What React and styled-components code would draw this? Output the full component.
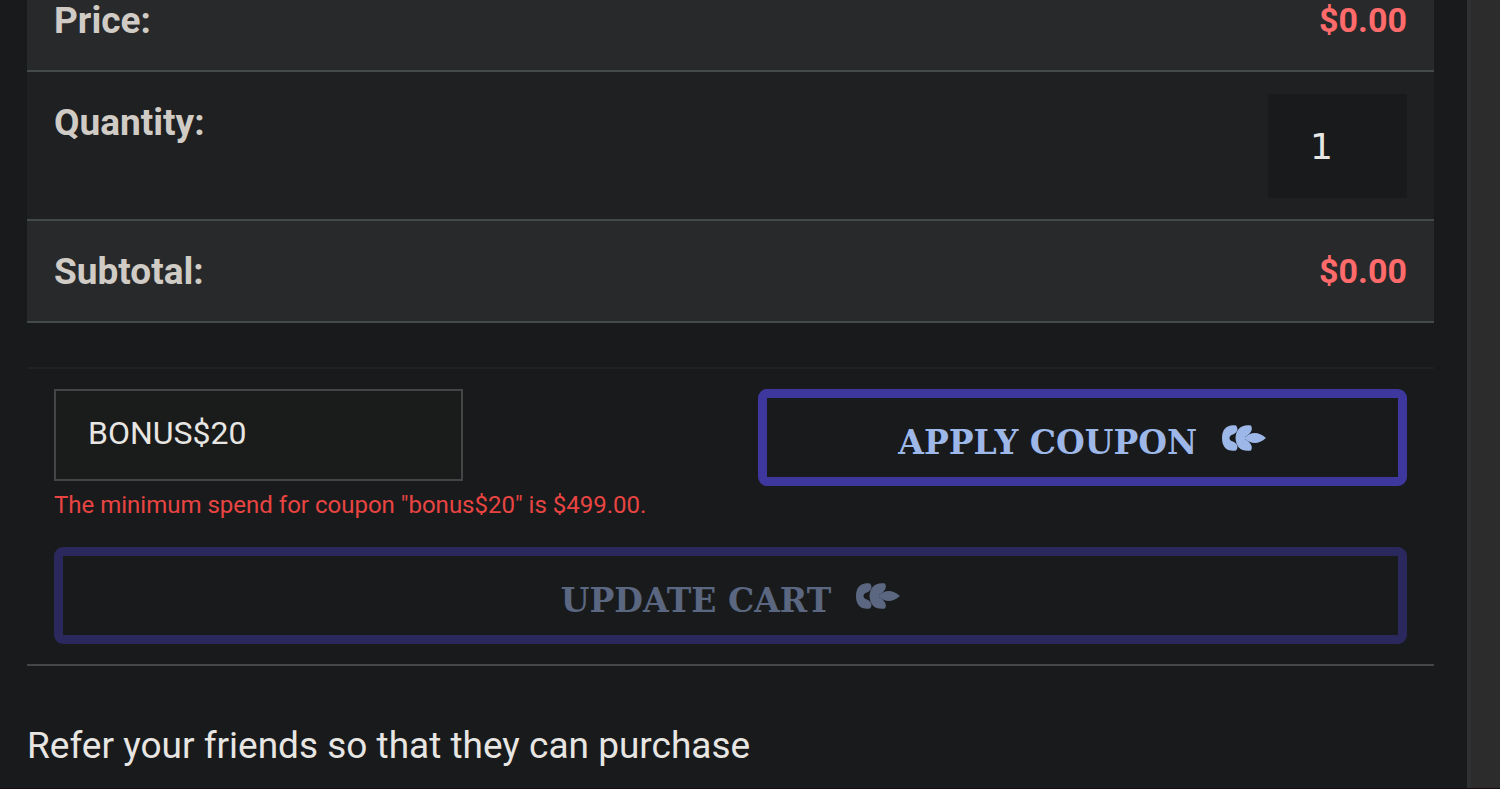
import React, { useState } from "react";
import styled, { createGlobalStyle } from "styled-components";

const GlobalStyle = createGlobalStyle`
  *, *::before, *::after { box-sizing: border-box; }
  body {
    margin: 0;
    background: #191a1c;
    color: #e8e6e3;
    font-family: Roboto, "Liberation Sans", sans-serif;
  }
`;

const Page = styled.div`
  display: flex;
  min-height: 100vh;
  overflow: hidden;
  border-bottom: 1px solid #170e12;
`;

const Content = styled.main`
  flex: 1;
  min-width: 0;
  padding: 0 33px 0 27px;
`;

const Gutter = styled.div`
  flex: 0 0 33px;
  background: #2c2c2c;
  border-left: 4px solid #2f3032;
`;

const CartTable = styled.table`
  width: 100%;
  margin: -30px 0 44px;
  border-spacing: 0;
  font-size: 37px;
  line-height: 57px;
`;

const Row = styled.tr`
  background: ${({ $raised }) => ($raised ? "#28292b" : "#1f2022")};
`;

const Label = styled.th`
  padding: 22px 27px 21px;
  border-bottom: 2px solid #444949;
  color: #d0ccc5;
  font-weight: 700;
  text-align: left;
  vertical-align: top;
`;

const Value = styled.td`
  padding: 22px 27px 21px;
  border-bottom: 2px solid #444949;
  color: #ff6b6b;
  font-size: 34px;
  font-weight: 700;
  text-align: right;
`;

const QuantityInput = styled.input`
  display: block;
  width: 139px;
  height: 104px;
  margin-left: auto;
  padding: 0 32px 0 42px;
  border: 0;
  border-radius: 0;
  background: #191a1b;
  color: #e8e6e3;
  font: 36px "DejaVu Sans", sans-serif;
  appearance: textfield;

  &::-webkit-inner-spin-button {
    display: none;
  }
`;

const Actions = styled.form`
  padding: 20px 27px;
  border-top: 2px solid #202123;
  border-bottom: 2px solid #454648;
`;

const CouponRow = styled.div`
  display: flex;
  justify-content: space-between;
  align-items: flex-start;
  margin-bottom: 26px;
`;

const CouponInput = styled.input`
  display: block;
  width: 409px;
  height: 92px;
  padding: 0 32px 4px;
  border: 2px solid #434546;
  border-radius: 0;
  background: #1a1b1b;
  color: #e8e6e3;
  font: 32px Roboto, "Liberation Sans", sans-serif;
`;

const CouponError = styled.p`
  margin: 8px 0 0;
  color: #e84542;
  font-size: 24px;
  line-height: 32px;
  white-space: nowrap;
`;

const ActionButton = styled.button`
  display: flex;
  justify-content: center;
  align-items: center;
  gap: 25px;
  width: ${({ $wide }) => ($wide ? "100%" : "48%")};
  height: 97px;
  padding: 0;
  border: 9px solid #3e379d;
  border-radius: 9px;
  background: transparent;
  color: #9db7e8;
  font: 700 33px "DejaVu Serif", serif;
  text-transform: uppercase;

  &:disabled {
    border-color: #2b285d;
    color: #5b6780;
  }
`;

const ButtonText = styled.span`
  padding-top: 10px;
`;

const Referral = styled.p`
  margin: 51px 0 0;
  font-size: 37px;
  line-height: 57px;
`;

function LeafIcon() {
  return (
    <svg width="44" height="26" viewBox="0 0 44 26" fill="currentColor" aria-hidden="true">
      <path d="M0 13C0 4 5-1 14 .4C17 4 15 8 11 9.500Q7.500 10.500 7.500 13Q7.500 15.500 11 16.500C15 18 17 22 14 25.600C5 27 0 22 0 13Z" />
      <path d="M13.500 13C14 4 19-1 29 .4C31.500 5 28 9 23 12L23 14C28 17 31.500 21 29 25.600C19 27 14 22 13.500 13Z" />
      <path d="M22 13C29 6.500 36 6 44 13C36 20 29 19.500 22 13Z" />
    </svg>
  );
}

export default function App() {
  const [quantity, setQuantity] = useState("1");
  const [coupon, setCoupon] = useState("BONUS$20");

  return (
    <>
      <GlobalStyle />
      <Page>
        <Content>
          <CartTable>
            <tbody>
              <Row $raised>
                <Label scope="row">Price:</Label>
                <Value>$0.00</Value>
              </Row>
              <Row>
                <Label scope="row">
                  <label htmlFor="quantity">Quantity:</label>
                </Label>
                <Value>
                  <QuantityInput
                    id="quantity"
                    type="number"
                    min="0"
                    value={quantity}
                    onChange={(e) => setQuantity(e.target.value)}
                  />
                </Value>
              </Row>
              <Row $raised>
                <Label scope="row">Subtotal:</Label>
                <Value>$0.00</Value>
              </Row>
            </tbody>
          </CartTable>

          <Actions onSubmit={(e) => e.preventDefault()}>
            <CouponRow>
              <div>
                <CouponInput
                  type="text"
                  aria-label="Coupon code"
                  aria-describedby="coupon-error"
                  value={coupon}
                  onChange={(e) => setCoupon(e.target.value)}
                />
                <CouponError id="coupon-error">
                  The minimum spend for coupon "bonus$20" is $499.00.
                </CouponError>
              </div>
              <ActionButton type="submit">
                <ButtonText>Apply coupon</ButtonText>
                <LeafIcon />
              </ActionButton>
            </CouponRow>
            <ActionButton type="button" $wide disabled>
              <ButtonText>Update cart</ButtonText>
              <LeafIcon />
            </ActionButton>
          </Actions>

          <Referral>Refer your friends so that they can purchase</Referral>
        </Content>
        <Gutter />
      </Page>
    </>
  );
}
